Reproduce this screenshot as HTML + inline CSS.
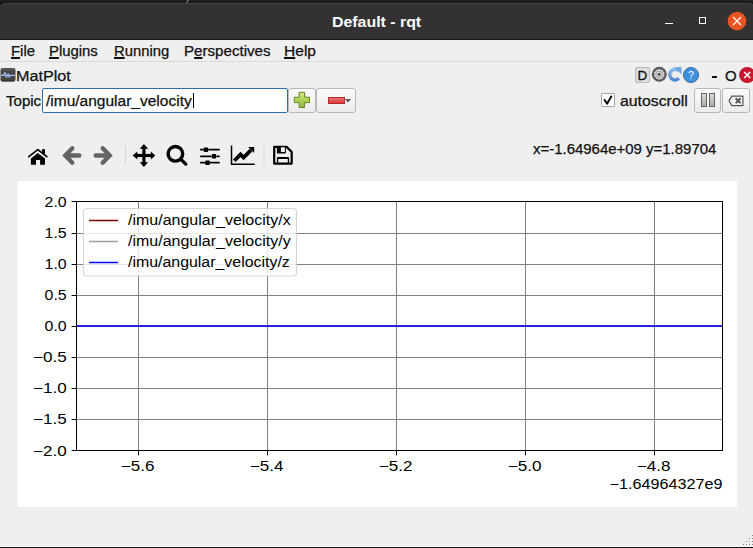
<!DOCTYPE html>
<html><head><meta charset="utf-8">
<style>
html,body{margin:0;padding:0;}
body{width:753px;height:548px;overflow:hidden;position:relative;background:#efefef;font-family:"Liberation Sans",sans-serif;}
.a{position:absolute;}
.t{position:absolute;white-space:nowrap;line-height:1;transform-origin:0 0;}
#top{left:0;top:0;width:753px;height:12px;background:#1f1f1f;box-shadow:inset 0 -10px 0 #161616, inset 0 2px 0 #202020;}
#tb{left:-1px;top:3px;width:755px;height:37px;background:#333132;border-radius:7px 5px 0 0;box-shadow:inset 0 1px 0 #454442;}
#tbline{left:0;top:39px;width:753px;height:1px;background:#1a1a1a;}
#menu{left:0;top:40px;width:753px;height:21px;background:#efefef;}
#menusep{left:0;top:61px;width:753px;height:1px;background:#d9d9d9;}
.mt{font-size:14px;color:#111;-webkit-text-stroke:0.25px #111;}
.u{text-decoration:underline;text-decoration-thickness:1.7px;text-underline-offset:0.6px;}
#fig{left:18px;top:181px;width:719px;height:326px;background:#fff;}
.btn{background:linear-gradient(#fafafa,#ececec);border:1px solid #b8b8b8;border-radius:3px;box-sizing:content-box;}
svg text{font-family:"Liberation Sans",sans-serif;font-size:13.89px;fill:#000;}
#bot{left:0;top:546px;width:753px;height:2px;background:#141414;border-top:1px solid #fbfbfb;box-sizing:border-box;}
</style></head><body>
<div class="a" id="top"></div>
<svg class="a" style="left:183px;top:0;" width="8" height="4"><path d="M5.5 0 L3.5 3" stroke="#8a9aa8" stroke-width="1"/></svg>
<div class="a" id="tb"></div>
<div class="a" id="tbline"></div>
<div class="t" style="left:332px;top:14.6px;font-size:14px;font-weight:bold;color:#fff;transform:scaleX(1.135);">Default - rqt</div>
<!-- window buttons -->
<div class="a" style="left:665px;top:22.6px;width:8px;height:1.6px;background:#fff;"></div>
<div class="a" style="left:699px;top:17px;width:5.4px;height:5.4px;border:1.3px solid #fff;"></div>
<svg class="a" style="left:727px;top:11px;" width="20" height="20" viewBox="0 0 20 20"><circle cx="10" cy="10" r="9.3" fill="#e95420"/><path d="M6 6L14 14M14 6L6 14" stroke="#fff" stroke-width="1.2"/></svg>

<div class="a" id="menu"></div>
<div class="a" id="menusep"></div>
<div class="t mt" style="left:10.5px;top:43.5px;transform:scaleX(1.064);"><span class="u">F</span>ile</div>
<div class="t mt" style="left:49.3px;top:43.5px;transform:scaleX(1.063);"><span class="u">P</span>lugins</div>
<div class="t mt" style="left:113.7px;top:43.5px;transform:scaleX(1.058);"><span class="u">R</span>unning</div>
<div class="t mt" style="left:184px;top:43.5px;transform:scaleX(1.08);">P<span class="u">e</span>rspectives</div>
<div class="t mt" style="left:284px;top:43.5px;transform:scaleX(1.11);"><span class="u">H</span>elp</div>

<!-- plugin title -->
<svg class="a" style="left:0;top:67px;" width="17" height="16" viewBox="0 0 17 16">
 <rect x="0.5" y="1" width="15" height="13.7" rx="2.2" fill="#474747"/>
 <path d="M1.5 2.4 H14.5" stroke="#6a6a6a" stroke-width="0.8"/>
 <path d="M1.5 13.4 H14.5" stroke="#333" stroke-width="0.8"/>
 <path d="M1 8.4 H3.8 L4.9 5.6 L6.3 10.2 L8.2 6.7 L9.2 10 L10.2 8.4 H15" fill="none" stroke="#a9c0f5" stroke-width="1.3" stroke-linejoin="round"/>
</svg>
<div class="t mt" style="left:16px;top:68.5px;transform:scaleX(1.154);">MatPlot</div>

<div class="t mt" style="left:6px;top:94px;transform:scaleX(1.075);">Topic</div>
<div class="a" style="left:42px;top:88px;width:244px;height:23px;background:#fff;border:1px solid #2f6ea8;border-radius:2px;"></div>
<div class="t mt" style="left:45.5px;top:93.8px;transform:scaleX(1.108);">/imu/angular_velocity</div>


<div class="a" style="left:193px;top:93px;width:1px;height:15px;background:#000;"></div>
<!-- right side plugin buttons -->
<div class="a" style="left:635px;top:67px;width:13px;height:14px;background:#dedede;border:1px solid #b9b9b9;border-radius:2px;"></div>
<div class="t" style="left:637.5px;top:69px;font-size:13.5px;color:#111;-webkit-text-stroke:0.3px #111;">D</div>
<svg class="a" style="left:651px;top:66px;" width="18" height="18" viewBox="0 0 18 18">
 <circle cx="8.3" cy="8.3" r="7.5" fill="#5a5a5a"/>
 <circle cx="8.3" cy="8.3" r="5.4" fill="#d9d9d9"/>
 <circle cx="13.80" cy="8.30" r="0.8" fill="#5a5a5a"/><circle cx="12.75" cy="11.53" r="0.8" fill="#5a5a5a"/><circle cx="10.00" cy="13.53" r="0.8" fill="#5a5a5a"/><circle cx="6.60" cy="13.53" r="0.8" fill="#5a5a5a"/><circle cx="3.85" cy="11.53" r="0.8" fill="#5a5a5a"/><circle cx="2.80" cy="8.30" r="0.8" fill="#5a5a5a"/><circle cx="3.85" cy="5.07" r="0.8" fill="#5a5a5a"/><circle cx="6.60" cy="3.07" r="0.8" fill="#5a5a5a"/><circle cx="10.00" cy="3.07" r="0.8" fill="#5a5a5a"/><circle cx="12.75" cy="5.07" r="0.8" fill="#5a5a5a"/>
 <circle cx="8.3" cy="8.3" r="3.5" fill="none" stroke="#8a8a8a" stroke-width="0.8"/>
 <circle cx="8.3" cy="8.3" r="1.6" fill="#555"/>
</svg>
<svg class="a" style="left:666px;top:65px;" width="18" height="19" viewBox="0 0 18 19">
 <defs><linearGradient id="rg" x1="0" y1="0" x2="0" y2="1"><stop offset="0" stop-color="#8cbcee"/><stop offset="1" stop-color="#4a8ad4"/></linearGradient></defs>
 <path d="M12.6 5.6 A5.3 5.3 0 1 0 12.9 13.3" fill="none" stroke="url(#rg)" stroke-width="3.6"/>
 <path d="M8.3 2.4 L15.4 1.7 L15.6 9.6 Z" fill="#6ea6e2"/>
</svg>
<svg class="a" style="left:682px;top:66px;" width="18" height="18" viewBox="0 0 18 18">
 <circle cx="9" cy="9" r="7.6" fill="#3d8fe0" stroke="#3a6590" stroke-width="0.9"/>
 <text x="9" y="12.8" text-anchor="middle" style="font-size:10.5px;fill:#fff;">?</text>
</svg>
<div class="a" style="left:712px;top:76px;width:5px;height:2px;background:#111;"></div>
<div class="t mt" style="left:725px;top:68.7px;transform:scaleX(1.07);">O</div>
<svg class="a" style="left:738px;top:66px;" width="18" height="18" viewBox="0 0 18 18">
 <circle cx="9.2" cy="9" r="8.1" fill="#c8172e"/>
 <path d="M6.2 6 L12.2 12 M12.2 6 L6.2 12" stroke="#fff" stroke-width="1.7"/>
</svg>

<!-- plus/minus buttons -->
<div class="a btn" style="left:288px;top:88px;width:26px;height:23px;"></div>
<svg class="a" style="left:293px;top:91px;" width="18" height="18" viewBox="0 0 18 18">
 <defs><linearGradient id="pg" x1="0" y1="0" x2="0" y2="1"><stop offset="0" stop-color="#d6ea7a"/><stop offset="1" stop-color="#8fb83a"/></linearGradient></defs>
 <path d="M6.2 1.3 H11.6 V6.2 H16.5 V11.6 H11.6 V16.5 H6.2 V11.6 H1.3 V6.2 H6.2 Z" fill="url(#pg)" stroke="#5e8a1c" stroke-width="1" stroke-linejoin="round"/>
</svg>
<div class="a btn" style="left:316px;top:88px;width:38px;height:23px;"></div>
<div class="a" style="left:328px;top:97px;width:14.5px;height:4.5px;background:linear-gradient(#f07070,#d83c3c);border:0.8px solid #b02c2c;"></div>
<svg class="a" style="left:344px;top:98px;" width="8" height="6"><path d="M1 1 H7 L4 4.5 Z" fill="#555"/></svg>

<!-- autoscroll -->
<div class="a" style="left:601.2px;top:93.2px;width:11.5px;height:11.5px;background:#fff;border:1px solid #a8a8a8;border-radius:1px;"></div>
<svg class="a" style="left:601px;top:93px;" width="14" height="14"><path d="M3.6 7 L6.1 10.8 L10.3 3.5" fill="none" stroke="#000" stroke-width="1.9" stroke-linecap="round" stroke-linejoin="round"/></svg>
<div class="t mt" style="left:620px;top:94px;transform:scaleX(1.13);">autoscroll</div>
<div class="a btn" style="left:694px;top:88px;width:25px;height:23px;"></div>
<div class="a" style="left:701px;top:93px;width:4px;height:12px;border:1px solid #666;background:linear-gradient(#d9dbd4,#a9ada5);"></div>
<div class="a" style="left:709px;top:93px;width:4px;height:12px;border:1px solid #666;background:linear-gradient(#d9dbd4,#a9ada5);"></div>
<div class="a btn" style="left:722px;top:88px;width:26px;height:23px;"></div>
<svg class="a" style="left:726px;top:93px;" width="20" height="16" viewBox="0 0 20 16">
 <path d="M3 7.7 L5.8 3.1 H16.9 V12.6 H5.8 Z" fill="none" stroke="#555" stroke-width="1.2" stroke-linejoin="round"/>
 <path d="M9.7 5.3 L14.5 10.1 M14.5 5.3 L9.7 10.1" stroke="#555" stroke-width="2"/>
</svg>

<!-- mpl toolbar -->
<svg class="a" style="left:0;top:0;" width="753" height="548">
 <g fill="#000">
  <path d="M28.8 156.6 L37.8 149.6 L46.8 156.6" fill="none" stroke="#000" stroke-width="1.8" stroke-linecap="round" stroke-linejoin="round"/>
  <rect x="42.1" y="149.2" width="2.9" height="5.2"/>
  <path d="M30.9 158.6 L37.8 153.1 L45 158.6 V164.7 H40.1 V160.1 H36 V164.7 H30.9 Z"/>
 </g>
 <path d="M72.3 148.3 L65.3 155.5 L72.3 162.7 M66 155.5 H79.3" fill="none" stroke="#646464" stroke-width="4.4" stroke-linecap="round" stroke-linejoin="miter"/>
 <path d="M102.7 148.3 L109.7 155.5 L102.7 162.7 M109 155.5 H95.7" fill="none" stroke="#646464" stroke-width="4.4" stroke-linecap="round" stroke-linejoin="miter"/>
 <rect x="125" y="146" width="1" height="18.5" fill="#d6d6d6"/>
 <g fill="#000">
  <rect x="142.3" y="147" width="3.2" height="17"/>
  <rect x="135.5" y="153.9" width="17" height="3.2"/>
  <path d="M143.9 144.1 L148.1 148.8 H139.7 Z"/>
  <path d="M143.9 166.9 L148.1 162.2 H139.7 Z"/>
  <path d="M132.7 155.5 L137.3 151.4 V159.6 Z"/>
  <path d="M155.3 155.5 L150.8 151.4 V159.6 Z"/>
 </g>
 <circle cx="175.4" cy="153.8" r="7.3" fill="none" stroke="#000" stroke-width="3.4"/>
 <path d="M180.6 159 L185.8 164.2" stroke="#000" stroke-width="3.3" stroke-linecap="round"/>
 <g stroke="#000" stroke-width="1.8" stroke-linecap="round">
  <path d="M200.9 149.7 H203 M209 149.7 H219 M200.9 156.3 H211 M217.1 156.3 H219 M200.9 162.7 H204.3 M210.7 162.7 H219"/>
 </g>
 <g fill="#000">
  <rect x="203.7" y="147.4" width="4.4" height="4.6" rx="0.8"/>
  <rect x="211.8" y="154" width="4.4" height="4.6" rx="0.8"/>
  <rect x="205.2" y="160.4" width="4.6" height="4.6" rx="0.8"/>
 </g>
 <path d="M231.5 145.6 V164.2 H254.8" fill="none" stroke="#000" stroke-width="1.5"/>
 <path d="M234.3 160.8 L240.5 154.4 L243.6 157.6 L251 150.2" fill="none" stroke="#000" stroke-width="3.8" stroke-linejoin="miter"/>
 <path d="M248.2 147.1 H254.2 V153.1 Z" fill="#000"/>
 <rect x="263.5" y="146" width="1" height="18.5" fill="#d6d6d6"/>
 <path d="M274.2 146.9 H286.6 L291.7 152 V163.6 H274.2 Z" fill="none" stroke="#000" stroke-width="2.2" stroke-linejoin="round"/>
 <path d="M276.9 146 H285.9 V152.6 Q285.9 153.6 284.9 153.6 H277.9 Q276.9 153.6 276.9 152.6 Z" fill="#000"/>
 <rect x="280.9" y="147.2" width="4" height="4.9" rx="0.6" fill="#efefef"/>
 <path d="M276.9 158.1 Q276.9 157.1 277.9 157.1 H288.1 Q289.1 157.1 289.1 158.1 V164 H276.9 Z M278.2 159.1 V163 H287.8 V159.1 Z" fill="#000" fill-rule="evenodd"/>
</svg>
<div class="t mt" style="left:533px;top:142px;transform:scaleX(1.068);">x=-1.64964e+09 y=1.89704</div>

<!--PLOT-->
<svg class="a" style="left:0;top:0;" width="753" height="548">
<rect x="18" y="181" width="719" height="326" fill="#fff"/>
<path d="M138.5 201.5V450.5 M267.5 201.5V450.5 M396.5 201.5V450.5 M525.5 201.5V450.5 M654.5 201.5V450.5 M76.5 233.50H722.5 M76.5 264.50H722.5 M76.5 295.50H722.5 M76.5 326.50H722.5 M76.5 357.50H722.5 M76.5 388.50H722.5 M76.5 419.50H722.5" stroke="#808080" stroke-width="1" fill="none"/>
<path d="M76.5 326H722.5" stroke="#800000" stroke-width="1.5" fill="none"/>
<path d="M76.5 326H722.5" stroke="#9e9ea6" stroke-width="1.5" fill="none"/>
<path d="M76.5 326H722.5" stroke="#0000ff" stroke-width="1.5" fill="none"/>
<rect x="76.5" y="201.5" width="646.0" height="249.0" fill="none" stroke="#000" stroke-width="1"/>
<path d="M71.6 201.50H76.5 M71.6 233.50H76.5 M71.6 264.50H76.5 M71.6 295.50H76.5 M71.6 326.50H76.5 M71.6 357.50H76.5 M71.6 388.50H76.5 M71.6 419.50H76.5 M71.6 450.50H76.5 M138.5 450.5V455.4 M267.5 450.5V455.4 M396.5 450.5V455.4 M525.5 450.5V455.4 M654.5 450.5V455.4" stroke="#000" stroke-width="1" fill="none"/>
<text x="66.70" y="207" text-anchor="end" textLength="22.09" lengthAdjust="spacingAndGlyphs">2.0</text>
<text x="66.70" y="238" text-anchor="end" textLength="22.09" lengthAdjust="spacingAndGlyphs">1.5</text>
<text x="66.70" y="269" text-anchor="end" textLength="22.09" lengthAdjust="spacingAndGlyphs">1.0</text>
<text x="66.70" y="300" text-anchor="end" textLength="22.09" lengthAdjust="spacingAndGlyphs">0.5</text>
<text x="66.70" y="331" text-anchor="end" textLength="22.09" lengthAdjust="spacingAndGlyphs">0.0</text>
<text x="66.70" y="362" text-anchor="end" textLength="33.73" lengthAdjust="spacingAndGlyphs">−0.5</text>
<text x="66.70" y="393" text-anchor="end" textLength="33.73" lengthAdjust="spacingAndGlyphs">−1.0</text>
<text x="66.70" y="424" text-anchor="end" textLength="33.73" lengthAdjust="spacingAndGlyphs">−1.5</text>
<text x="66.70" y="456" text-anchor="end" textLength="33.73" lengthAdjust="spacingAndGlyphs">−2.0</text>
<text x="137.70" y="471" text-anchor="middle" textLength="33.73" lengthAdjust="spacingAndGlyphs">−5.6</text>
<text x="266.70" y="471" text-anchor="middle" textLength="33.73" lengthAdjust="spacingAndGlyphs">−5.4</text>
<text x="395.70" y="471" text-anchor="middle" textLength="33.73" lengthAdjust="spacingAndGlyphs">−5.2</text>
<text x="524.70" y="471" text-anchor="middle" textLength="33.73" lengthAdjust="spacingAndGlyphs">−5.0</text>
<text x="653.70" y="471" text-anchor="middle" textLength="33.73" lengthAdjust="spacingAndGlyphs">−4.8</text>
<text x="722.50" y="489" text-anchor="end" textLength="112.97" lengthAdjust="spacingAndGlyphs">−1.64964327e9</text>
<rect x="83.5" y="208.5" width="213" height="67.5" rx="3.5" fill="#fff" fill-opacity="0.8" stroke="#cccccc" stroke-opacity="0.8" stroke-width="1.1"/>
<path d="M89 220.5H118" stroke="#800000" stroke-width="1.5" fill="none"/>
<text x="128" y="225" textLength="162.70" lengthAdjust="spacingAndGlyphs">/imu/angular_velocity/x</text>
<path d="M89 241.5H118" stroke="#9e9ea6" stroke-width="1.5" fill="none"/>
<text x="128" y="246.2" textLength="162.70" lengthAdjust="spacingAndGlyphs">/imu/angular_velocity/y</text>
<path d="M89 262.5H118" stroke="#0000ff" stroke-width="1.5" fill="none"/>
<text x="128" y="266.8" textLength="161.77" lengthAdjust="spacingAndGlyphs">/imu/angular_velocity/z</text>
</svg>
<!--/PLOT-->
<div class="a" style="left:752px;top:535px;width:1px;height:1px;background:#8a8a8a;box-shadow:1px 1px 0 #fff;"></div>
<div class="a" style="left:749px;top:538px;width:1px;height:1px;background:#8a8a8a;box-shadow:1px 1px 0 #fff;"></div>
<div class="a" style="left:752px;top:538px;width:1px;height:1px;background:#8a8a8a;box-shadow:1px 1px 0 #fff;"></div>
<div class="a" style="left:746px;top:541px;width:1px;height:1px;background:#8a8a8a;box-shadow:1px 1px 0 #fff;"></div>
<div class="a" style="left:749px;top:541px;width:1px;height:1px;background:#8a8a8a;box-shadow:1px 1px 0 #fff;"></div>
<div class="a" style="left:752px;top:541px;width:1px;height:1px;background:#8a8a8a;box-shadow:1px 1px 0 #fff;"></div>
<div class="a" style="left:743px;top:544px;width:1px;height:1px;background:#8a8a8a;box-shadow:1px 1px 0 #fff;"></div>
<div class="a" style="left:746px;top:544px;width:1px;height:1px;background:#8a8a8a;box-shadow:1px 1px 0 #fff;"></div>
<div class="a" style="left:749px;top:544px;width:1px;height:1px;background:#8a8a8a;box-shadow:1px 1px 0 #fff;"></div>
<div class="a" style="left:752px;top:544px;width:1px;height:1px;background:#8a8a8a;box-shadow:1px 1px 0 #fff;"></div>
<div class="a" id="bot"></div>
</body></html>
